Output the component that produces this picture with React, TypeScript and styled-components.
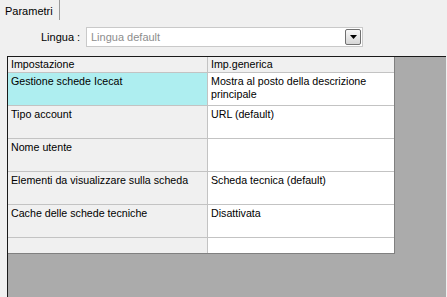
import React from "react";
import styled, { createGlobalStyle } from "styled-components";

const Global = createGlobalStyle`
  html, body { margin: 0; padding: 0; background: #f0f0f0; }
  body { width: 447px; height: 297px; overflow: hidden; font-family: "Liberation Sans", Arial, sans-serif; font-size: 11px; color: #000; }
`;

const Page = styled.div`
  display: flex;
  flex-direction: column;
  height: 297px;
`;

const TabBar = styled.div`
  display: flex;
  height: 22px;
`;

const Tab = styled.div`
  padding: 4px 6px 0 5px;
  line-height: 14px;
  font-size: 11px;
  border-right: 1px solid #9a9a9a;
  height: 16px;
`;

const FieldRow = styled.div`
  display: flex;
  align-items: center;
  height: 20px;
  margin-top: 5px;
  padding-left: 41px;
`;

const Label = styled.span`
  width: 45px;
  font-size: 11px;
`;

const Combo = styled.div`
  width: 270px;
  height: 18px;
  border: 1px solid #c9c9c9;
  background: #fff;
  display: flex;
  align-items: center;
  justify-content: space-between;
  padding: 0 1px 0 4px;
  box-sizing: content-box;
`;

const Placeholder = styled.span`
  color: #8d8d8d;
  font-size: 11px;
`;

const DropBtn = styled.div`
  width: 14px;
  height: 14px;
  border: 1px solid #707070;
  border-radius: 2px;
  background: linear-gradient(#f8f8f8, #d6d6d6);
  display: flex;
  align-items: center;
  justify-content: center;
`;

const GridFrame = styled.div`
  margin-top: 9px;
  margin-left: 7px;
  margin-right: 1px;
  flex: 1;
  border-top: 1px solid #1a1a1a;
  border-left: 1px solid #1a1a1a;
  background: #ababab;
`;

const Table = styled.div`
  width: 386px;
  display: grid;
  grid-template-columns: 200px 186px;
  border-right: 1px solid #808080;
  border-bottom: 1px solid #808080;
  background: #fff;
  font-family: "Liberation Sans", Arial, sans-serif;
  font-size: 10.67px;
`;

const Cell = styled.div<{ $bg: string; $h: number; $pt: number; $last?: boolean }>`
  background: ${(p) => p.$bg};
  height: ${(p) => p.$h}px;
  box-sizing: border-box;
  padding: ${(p) => p.$pt}px 3px 0 3px;
  line-height: 13px;
  border-bottom: ${(p) => (p.$last ? "none" : "1px solid #c3c3c3")};
  overflow: hidden;
`;

const LeftCell = styled(Cell)`
  border-right: 1px solid #c3c3c3;
`;

const rows: { k: string; v: string; h: number; hl?: boolean }[] = [
  { k: "Impostazione", v: "Imp.generica", h: 16 },
  { k: "Gestione schede Icecat", v: "Mostra al posto della descrizione principale", h: 33, hl: true },
  { k: "Tipo account", v: "URL (default)", h: 33 },
  { k: "Nome utente", v: "", h: 33 },
  { k: "Elementi da visualizzare sulla scheda", v: "Scheda tecnica (default)", h: 33 },
  { k: "Cache delle schede tecniche", v: "Disattivata", h: 33 },
  { k: "", v: "", h: 15 },
];

export default function App() {
  return (
    <Page>
      <Global />
      <TabBar>
        <Tab>Parametri</Tab>
      </TabBar>
      <FieldRow>
        <Label>Lingua :</Label>
        <Combo>
          <Placeholder>Lingua default</Placeholder>
          <DropBtn>
            <svg width="7" height="4" viewBox="0 0 7 4">
              <polygon points="0,0 7,0 3.5,4" fill="#000" />
            </svg>
          </DropBtn>
        </Combo>
      </FieldRow>
      <GridFrame>
        <Table>
          {rows.map((r, i) => {
            const last = i === rows.length - 1;
            const pt = i === 0 ? 1 : 2;
            return (
              <React.Fragment key={i}>
                <LeftCell $bg={r.hl ? "#aeeef0" : "#f0f0f0"} $h={r.h} $pt={pt} $last={last}>
                  {r.k}
                </LeftCell>
                <Cell $bg={i === 0 ? "#f0f0f0" : "#fff"} $h={r.h} $pt={pt} $last={last}>
                  {r.v}
                </Cell>
              </React.Fragment>
            );
          })}
        </Table>
      </GridFrame>
    </Page>
  );
}
